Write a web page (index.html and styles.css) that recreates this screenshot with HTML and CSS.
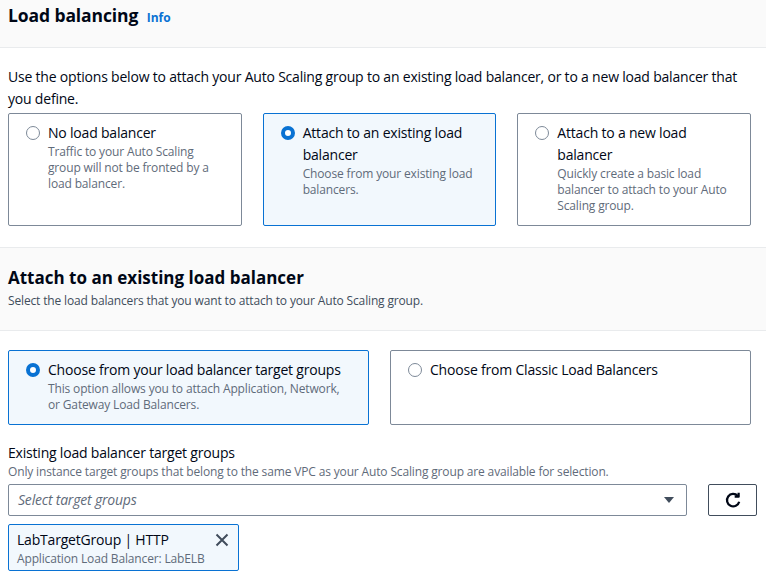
FILE: index.html
```html
<!DOCTYPE html>
<html>
<head>
<meta charset="utf-8">
<link rel="stylesheet" href="styles.css">
</head>
<body>
<div class="panel-header">
  <h2 class="title">Load balancing <a class="info">Info</a></h2>
</div>
<div class="panel-body">
  <p class="intro">Use the options below to attach your Auto Scaling group to an existing load balancer, or to a new load balancer that you define.</p>
  <div class="tiles tiles-3">
    <div class="tile">
      <span class="radio"></span>
      <div class="tile-text">
        <div class="tile-label">No load balancer</div>
        <div class="tile-desc">Traffic to your Auto Scaling group will not be fronted by a load balancer.</div>
      </div>
    </div>
    <div class="tile selected">
      <span class="radio checked"></span>
      <div class="tile-text">
        <div class="tile-label">Attach to an existing load balancer</div>
        <div class="tile-desc">Choose from your existing load balancers.</div>
      </div>
    </div>
    <div class="tile">
      <span class="radio"></span>
      <div class="tile-text">
        <div class="tile-label">Attach to a new load balancer</div>
        <div class="tile-desc">Quickly create a basic load balancer to attach to your Auto Scaling group.</div>
      </div>
    </div>
  </div>
</div>
<div class="sub-header">
  <h3 class="sub-title">Attach to an existing load balancer</h3>
  <div class="sub-desc">Select the load balancers that you want to attach to your Auto Scaling group.</div>
</div>
<div class="sub-body">
  <div class="tiles tiles-2">
    <div class="tile selected">
      <span class="radio checked"></span>
      <div class="tile-text">
        <div class="tile-label">Choose from your load balancer target groups</div>
        <div class="tile-desc">This option allows you to attach Application, Network, or Gateway Load Balancers.</div>
      </div>
    </div>
    <div class="tile">
      <span class="radio"></span>
      <div class="tile-text">
        <div class="tile-label">Choose from Classic Load Balancers</div>
      </div>
    </div>
  </div>
  <div class="field-label">Existing load balancer target groups</div>
  <div class="field-desc">Only instance target groups that belong to the same VPC as your Auto Scaling group are available for selection.</div>
  <div class="select-row">
    <div class="select">
      <span class="placeholder">Select target groups</span>
      <svg class="caret" width="12" height="12" viewBox="0 0 12 12"><path d="M1 3h10L6 9z" fill="#414d5c"/></svg>
    </div>
    <button class="refresh">
      <svg width="18" height="18" viewBox="0 0 16 16" fill="none" stroke="#000716" stroke-width="2" stroke-linejoin="round"><path d="M13.5 9.5A5.5 5.5 0 1 1 12.2 4.4"/><path d="M13 1.5v3.5H9.5"/></svg>
    </button>
  </div>
  <div class="token">
    <div class="token-text">
      <div class="token-label">LabTargetGroup | HTTP</div>
      <div class="token-desc">Application Load Balancer: LabELB</div>
    </div>
    <svg class="token-x" width="14" height="14" viewBox="0 0 14 14" stroke="#414d5c" stroke-width="2"><path d="M1.5 1.5l11 11M12.5 1.5l-11 11"/></svg>
  </div>
</div>
</body>
</html>
```
FILE: styles.css
```css
* { box-sizing: border-box; }
html, body { margin: 0; padding: 0; background: #fff; }
body {
  font-family: "Open Sans", "Noto Sans", sans-serif;
  color: #000716;
  font-size: 14px;
  line-height: 22px;
  letter-spacing: -0.2px;
  width: 766px;
}
.panel-header {
  background: #fafafa;
  height: 48px;
  border-bottom: 1px solid #e9ebed;
  padding: 4px 8px 0;
}
.title {
  margin: 0;
  font-size: 17.5px;
  line-height: 22px;
  font-weight: 700;
  letter-spacing: -0.1px;
}
.info {
  font-size: 12px;
  font-weight: 700;
  color: #0972d3;
  margin-left: 4px;
  letter-spacing: 0;
}
.panel-body {
  padding: 18px 8px 21px;
  border-bottom: 1px solid #e9ebed;
}
.intro { margin: 0 0 3px; }
.tiles {
  display: grid;
  gap: 21px;
  width: 743px;
}
.tiles-3 { grid-template-columns: repeat(3, 1fr); }
.tiles-2 { grid-template-columns: repeat(2, 1fr); }
.tile {
  display: flex;
  gap: 8px;
  border: 1px solid #7d8998;
  border-radius: 2px;
  padding: 8px 16px 11px 17px;
  background: #fff;
}
.tile.selected {
  border-color: #0972d3;
  background: #f2f8fd;
}
.radio {
  flex: none;
  width: 14px;
  height: 14px;
  border-radius: 50%;
  border: 1.5px solid #7d8998;
  margin-top: 4px;
  background: #fff;
}
.radio.checked {
  border: 4px solid #0972d3;
}
.tile-label { font-size: 14px; line-height: 22px; }
.tile-desc { font-size: 12px; line-height: 16px; color: #5f6b7a; letter-spacing: -0.15px; }
.sub-header {
  background: #fafafa;
  padding: 19px 8px 21px;
  border-bottom: 1px solid #e9ebed;
}
.sub-title {
  margin: 0 0 4px;
  font-size: 17px;
  line-height: 22px;
  font-weight: 700;
  letter-spacing: 0;
}
.sub-desc { font-size: 12px; line-height: 16px; color: #414d5c; letter-spacing: -0.15px; }
.sub-body { padding: 19px 8px 0; }
.field-label { margin-top: 17px; font-size: 14px; line-height: 22px; }
.field-desc { font-size: 12px; line-height: 16px; color: #5f6b7a; letter-spacing: -0.15px; }
.select-row {
  display: flex;
  gap: 21px;
  margin-top: 4px;
  width: 749px;
}
.select {
  flex: 1;
  height: 32px;
  border: 1px solid #7d8998;
  border-radius: 2px;
  display: flex;
  align-items: center;
  justify-content: space-between;
  padding: 0 11px 0 9px;
}
.placeholder { font-style: italic; color: #5f6b7a; }
.refresh {
  width: 49px;
  height: 32px;
  border: 1px solid #414d5c;
  border-radius: 2px;
  background: #fff;
  display: flex;
  align-items: center;
  justify-content: center;
  padding: 0;
}
.token {
  margin-top: 8px;
  width: 231px;
  border: 1px solid #0972d3;
  border-radius: 2px;
  background: #f2f8fd;
  display: flex;
  justify-content: space-between;
  padding: 4px 9px 3px 8px;
}
.token-label { font-size: 14px; line-height: 22px; }
.token-desc { font-size: 12px; line-height: 16px; color: #5f6b7a; letter-spacing: -0.15px; }
.token-x { margin-top: 4px; }
```
